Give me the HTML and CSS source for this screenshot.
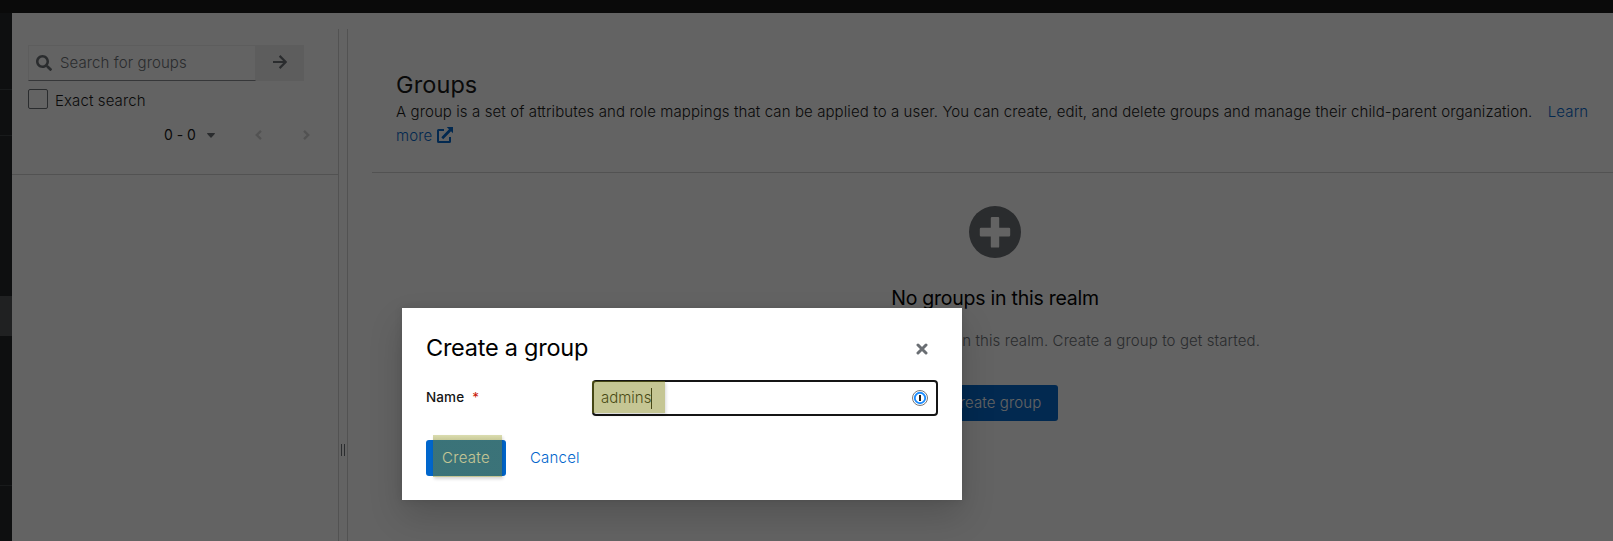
FILE: index.html
```
<!DOCTYPE html>
<html lang="en">
<head>
<meta charset="utf-8">
<title>Groups</title>
<link rel="stylesheet" href="styles.css">
</head>
<body>
<div class="page">
  <header class="masthead"></header>
  <div class="shell">
    <nav class="sidebar">
      <div class="nav-head"></div>
      <div class="nav-realm"></div>
      <div class="nav-space"></div>
      <div class="nav-active"></div>
      <div class="nav-rest"></div>
    </nav>
    <main class="content">
      <section class="tree">
        <div class="search">
          <div class="search-field">
            <svg width="16" height="16" viewBox="0 0 512 512"><path fill="#6a6e73" d="M505 442.700 405.300 343c-4.500-4.500-10.600-7-17-7H372c27.600-35.300 44-79.700 44-128C416 93.100 322.900 0 208 0S0 93.100 0 208s93.100 208 208 208c48.300 0 92.700-16.400 128-44v16.300c0 6.400 2.500 12.500 7 17l99.700 99.700c9.400 9.400 24.600 9.400 33.900 0l28.300-28.300c9.400-9.400 9.400-24.600.1-34zM208 336c-70.700 0-128-57.200-128-128 0-70.700 57.200-128 128-128 70.700 0 128 57.200 128 128 0 70.700-57.200 128-128 128z"/></svg>
            <span class="placeholder">Search for groups</span>
          </div>
          <button class="search-go"><svg width="14" height="14" viewBox="0 0 14 14" fill="none" stroke="#6a6e73" stroke-width="2.200"><path d="M0 7h12.500M6.600.900 12.700 7l-6.100 6.100"/></svg></button>
        </div>
        <label class="exact"><span class="box"></span>Exact search</label>
        <div class="pager">
          <span class="range">0 - 0</span>
          <svg class="caret" width="8" height="5" viewBox="0 0 8 5"><path fill="#6a6e73" d="M.5 0h7q.8.300.2 1L4.500 4.600q-.5.500-1 0L.3 1Q-.2.300.5 0z"/></svg>
          <svg class="prev" width="7" height="10" viewBox="0 0 7 10" fill="none" stroke="#d2d2d2" stroke-width="2.400"><path d="M6 .900 1.800 5 6 9.100"/></svg>
          <svg class="next" width="7" height="10" viewBox="0 0 7 10" fill="none" stroke="#d2d2d2" stroke-width="2.400"><path d="M1 .900 5.200 5 1 9.100"/></svg>
        </div>
      </section>
      <div class="splitter"><i class="grip"></i></div>
      <section class="detail">
        <div class="intro">
          <h1>Groups</h1>
          <p>A group is a set of attributes and role mappings that can be applied to a user. You can create, edit, and delete groups and manage their child-parent organization. <a class="learn">Learn more <svg width="16" height="16" viewBox="0 0 16 16"><path fill="#06c" d="M9.700 0H16v6.300l-2-2L6.200 12.200 4.300 10.300 12 2.300z"/><path fill="none" stroke="#06c" stroke-width="2" d="M7 3H1.500q-.5 0-.5.500v11q0 .500.500.500h11q.500 0 .500-.500V10"/></svg></a></p>
        </div>
        <div class="empty">
          <svg class="plus" width="52" height="52" viewBox="0 0 52 52"><circle cx="26" cy="26" r="26" fill="#6a6e73"/><path fill="#fff" d="M23 11h6.200q1 0 1 1v9.800H40q1.200 0 1.200 1.200v6.200q0 1.200-1.200 1.200h-9.800v10q0 1.200-1.200 1.200h-6q-1.200 0-1.200-1.200v-10H12q-1.200 0-1.200-1.200V23q0-1.200 1.200-1.200h9.800V12q0-1 1.200-1z"/></svg>
          <h2>No groups in this realm</h2>
          <p>You haven't created any groups in this realm. Create a group to get started.</p>
          <button class="primary">Create group</button>
        </div>
      </section>
    </main>
  </div>
</div>
<div class="backdrop">
  <div class="modal">
    <div class="modal-head">
      <h1>Create a group</h1>
      <svg width="12" height="12" viewBox="0 0 12 12" fill="none" stroke="#6a6e73" stroke-width="3" stroke-linecap="round"><path d="M2 2l8 8M10 2 2 10"/></svg>
    </div>
    <div class="row">
      <span class="label">Name<span class="star">*</span></span>
      <div class="input">
        <span class="value">admins</span><i class="cursor"></i>
        <svg class="key" width="16" height="16" viewBox="0 0 16 16"><circle cx="8" cy="8" r="7.500" fill="#fff" stroke="#777"/><circle cx="8" cy="8" r="5.200" fill="#fff" stroke="#1a8cff" stroke-width="1.900"/><path stroke="#222" stroke-width="2" d="M8 5v6"/></svg>
        <i class="mark mark-name"></i>
      </div>
    </div>
    <div class="actions">
      <button class="primary create">Create<i class="mark mark-create"></i></button>
      <a class="cancel">Cancel</a>
    </div>
  </div>
</div>
</body>
</html>
```
FILE: styles.css
```
* { box-sizing: border-box; }
body { margin: 0; height: 541px; overflow: hidden; font: 300 15px/24px Inter, "Liberation Sans", sans-serif; letter-spacing: .1px; color: #151515; position: relative; }
h1, h2, p { margin: 0; }
svg { display: block; flex: none; }
button { border: 0; padding: 0; font: inherit; letter-spacing: inherit; }

.page { display: flex; flex-direction: column; height: 541px; }
.masthead { height: 13px; background: #151515; flex: none; }
.shell { display: flex; flex: 1; min-height: 0; }
.sidebar { width: 12px; background: #212427; display: flex; flex-direction: column; }
.nav-head { height: 77px; border-bottom: 1px solid #3c3f42; }
.nav-realm { height: 46px; border-bottom: 1px solid #3c3f42; }
.nav-space { height: 160px; }
.nav-active { height: 40px; background: #4f5255; }
.nav-rest { height: 150px; border-bottom: 1px solid #3c3f42; }

.content { flex: 1; display: flex; background: #fff; padding-top: 16px; min-width: 0; }
.tree { width: 326px; height: 146px; padding: 16px 16px 0; border-bottom: 1px solid #d2d2d2; }
.search { display: flex; width: 276px; height: 36px; }
.search-field { width: 228px; display: flex; gap: 8px; align-items: center; padding: 0 0 1px 7px; border: 1px solid #f0f0f0; border-bottom-color: #8a8d90; }
.placeholder { color: #6a6e73; }
.search-go { width: 48px; background: #f0f0f0; display: flex; align-items: center; justify-content: center; padding-bottom: 2px; }
.exact { display: flex; gap: 7px; margin-top: 8px; height: 24px; }
.box { width: 20px; height: 20px; border: 1px solid #6a6e73; border-radius: 2px; }
.pager { display: flex; align-items: center; margin-top: 10px; height: 24px; padding-left: 136px; }
.range { font-size: 14px; font-weight: 400; width: 43px; letter-spacing: -.05px; }
.prev { margin-left: 40px; }
.next { margin-left: 41px; }

.splitter { width: 10px; border: solid #d2d2d2; border-width: 0 1px; display: flex; align-items: center; justify-content: center; padding-top: 330px; }
.grip { width: 4px; height: 12px; border: solid #6a6e73; border-width: 0 1px; }

.detail { flex: 1; padding-left: 24px; min-width: 0; }
.intro { height: 144px; padding: 41px 16px 0 24px; border-bottom: 1px solid #d2d2d2; }
.intro h1 { font-size: 23.5px; font-weight: 400; line-height: 30px; letter-spacing: .1px; }
.learn { color: #06c; margin-left: 11px; }
.learn svg { display: inline-block; vertical-align: -2px; }
.empty { display: flex; flex-direction: column; align-items: center; padding-top: 33px; padding-left: 5px; }
.empty h2 { margin-top: 25px; font-size: 19.5px; font-weight: 400; line-height: 30px; letter-spacing: -.25px; color: #000; }
.empty p { margin-top: 16px; color: #6a6e73; }
.primary { background: #06c; color: #fff; border-radius: 3px; height: 36px; }
.empty .primary { margin-top: 32px; width: 126px; }

.backdrop { position: absolute; inset: 0; background: rgba(3, 3, 3, .62); }
.modal { position: absolute; left: 402px; top: 308px; width: 560px; height: 192px; padding: 24px; background: #fff; box-shadow: 0 16px 32px rgba(3, 3, 3, .16), 0 0 8px rgba(3, 3, 3, .1); }
.modal-head { display: flex; justify-content: space-between; padding-right: 10px; height: 48px; }
.modal-head h1 { font-size: 23.5px; font-weight: 400; line-height: 31px; letter-spacing: -.25px; color: #000; }
.modal-head svg { margin-top: 11px; }
.row { display: flex; justify-content: space-between; height: 36px; }
.label { font-size: 13.5px; font-weight: 500; line-height: 34px; letter-spacing: .1px; }
.star { color: #c9190b; margin-left: 8px; font-weight: 400; }
.input { position: relative; width: 346px; height: 36px; border: 2px solid #151515; border-radius: 4px; display: flex; align-items: center; padding: 0 8px 0 7px; }
.value { letter-spacing: 0; }
.cursor { width: 1px; height: 21px; background: #151515; }
.key { margin-left: auto; }
.actions { display: flex; gap: 24px; margin-top: 24px; height: 36px; line-height: 35px; }
.create { position: relative; width: 80px; padding-bottom: 2px; letter-spacing: .3px; }
.cancel { color: #06c; letter-spacing: .2px; }
.mark { position: absolute; background: rgba(128, 130, 22, .46); box-shadow: 1px 2px 3px rgba(0, 0, 0, .16); }
.mark-name { left: -2px; top: -1px; width: 73px; height: 32px; }
.mark-create { left: 7px; top: -5px; width: 69px; height: 42px; background: linear-gradient(rgba(150, 155, 22, .34), rgba(128, 130, 22, .46) 6px); }
```
